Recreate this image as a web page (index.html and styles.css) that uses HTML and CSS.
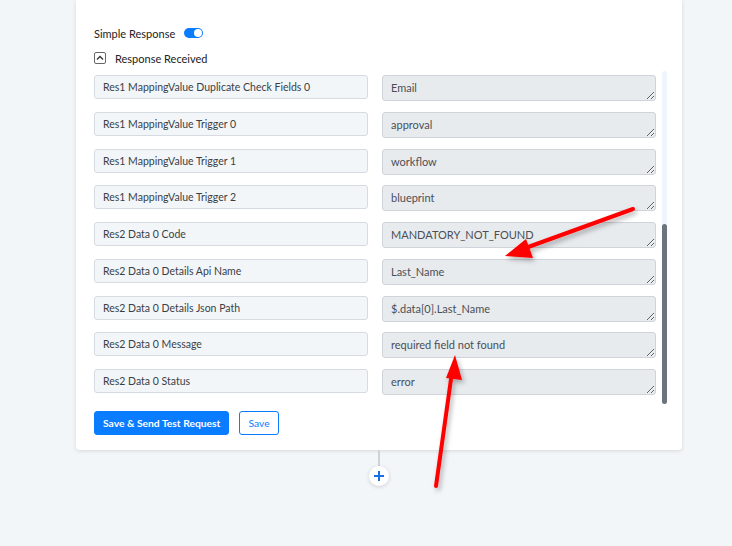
FILE: index.html
```html
<!DOCTYPE html>
<html lang="en">
<head>
    <meta charset="UTF-8">
    <meta name="viewport" content="width=device-width, initial-scale=1.0">
    <title>Response Mapping</title>
    <link rel="stylesheet" href="styles.css">
</head>
<body>
    <div class="page">
        <div class="card">
            <div class="toggle-row">
                <span>Simple Response</span>
                <span class="toggle"><span class="knob"></span></span>
            </div>
            <div class="section-head">
                <span class="chevron">
                    <svg width="8" height="6" viewBox="0 0 8 6"><path d="M1 4.5 L4 1.5 L7 4.5" fill="none" stroke="#333" stroke-width="1.3"/></svg>
                </span>
                <span>Response Received</span>
            </div>
            <div class="list">
                <div class="rows">
                    <div class="row">
                        <input class="key" type="text" value="Res1 MappingValue Duplicate Check Fields 0" readonly>
                        <textarea class="val" readonly>Email</textarea>
                    </div>
                    <div class="row">
                        <input class="key" type="text" value="Res1 MappingValue Trigger 0" readonly>
                        <textarea class="val" readonly>approval</textarea>
                    </div>
                    <div class="row">
                        <input class="key" type="text" value="Res1 MappingValue Trigger 1" readonly>
                        <textarea class="val" readonly>workflow</textarea>
                    </div>
                    <div class="row">
                        <input class="key" type="text" value="Res1 MappingValue Trigger 2" readonly>
                        <textarea class="val" readonly>blueprint</textarea>
                    </div>
                    <div class="row">
                        <input class="key" type="text" value="Res2 Data 0 Code" readonly>
                        <textarea class="val" readonly>MANDATORY_NOT_FOUND</textarea>
                    </div>
                    <div class="row">
                        <input class="key" type="text" value="Res2 Data 0 Details Api Name" readonly>
                        <textarea class="val" readonly>Last_Name</textarea>
                    </div>
                    <div class="row">
                        <input class="key" type="text" value="Res2 Data 0 Details Json Path" readonly>
                        <textarea class="val" readonly>$.data[0].Last_Name</textarea>
                    </div>
                    <div class="row">
                        <input class="key" type="text" value="Res2 Data 0 Message" readonly>
                        <textarea class="val" readonly>required field not found</textarea>
                    </div>
                    <div class="row">
                        <input class="key" type="text" value="Res2 Data 0 Status" readonly>
                        <textarea class="val" readonly>error</textarea>
                    </div>
                </div>
                <div class="track"><div class="thumb"></div></div>
            </div>
            <div class="actions">
                <button class="btn btn-primary">Save &amp; Send Test Request</button>
                <button class="btn btn-outline">Save</button>
            </div>
        </div>
        <div class="connector"></div>
        <div class="add">
            <svg width="12" height="12" viewBox="0 0 12 12"><path d="M6 1 V11 M1 6 H11" stroke="#1a6fe8" stroke-width="2"/></svg>
        </div>
    </div>

    <!-- annotation arrows -->
    <svg class="arrows" width="732" height="546" viewBox="0 0 732 546">
        <defs>
            <filter id="shade" x="-20%" y="-20%" width="140%" height="140%">
                <feDropShadow dx="2" dy="3" stdDeviation="2.5" flood-color="#000" flood-opacity="0.3"/>
            </filter>
        </defs>
        <g filter="url(#shade)" fill="#ff0000" stroke="#ff0000">
            <line x1="633" y1="209" x2="520" y2="250" stroke-width="4" stroke-linecap="round"/>
            <polygon points="505,256 526,239 533,258" stroke="none"/>
            <line x1="436" y1="486" x2="452" y2="372" stroke-width="4" stroke-linecap="round"/>
            <polygon points="455,355 462,380 446,378" stroke="none"/>
        </g>
    </svg>
</body>
</html>
```

FILE: styles.css
```css
body {
    margin: 0;
    background: #f3f6f9;
    font-family: Lato, 'Noto Sans', sans-serif;
    color: #333;
    position: relative;
    width: 732px;
    height: 546px;
    overflow: hidden;
}
.page {
    width: 606px;
    margin-left: 76px;
    display: flex;
    flex-direction: column;
    align-items: center;
}
.card {
    width: 606px;
    box-sizing: border-box;
    background: #fff;
    padding: 24px 15px 15px 18px;
    border-radius: 0 0 4px 4px;
    box-shadow: 0 1px 4px rgba(0, 0, 0, 0.12);
}
.toggle-row {
    height: 18px;
    display: flex;
    align-items: center;
    gap: 9px;
    font-size: 11px;
    color: #222;
}
.toggle {
    width: 19px;
    height: 10px;
    border-radius: 5px;
    background: #0a7cff;
    display: flex;
    justify-content: flex-end;
    align-items: center;
    padding: 0 1px;
    box-sizing: border-box;
}
.knob {
    width: 8px;
    height: 8px;
    border-radius: 50%;
    background: #fff;
}
.section-head {
    margin-top: 7px;
    height: 18px;
    display: flex;
    align-items: center;
    gap: 9px;
    font-size: 11px;
    color: #222;
}
.chevron {
    width: 12px;
    height: 12px;
    box-sizing: border-box;
    border: 1px solid #666;
    border-radius: 2px;
    display: flex;
    align-items: center;
    justify-content: center;
}
.list {
    margin-top: 4px;
    display: flex;
    gap: 6px;
}
.rows {
    width: 562px;
    padding: 4px 0 9px;
    display: flex;
    flex-direction: column;
    gap: 10.75px;
}
.row {
    display: grid;
    grid-template-columns: 274px 274px;
    column-gap: 14px;
    align-items: start;
}
.key {
    height: 24px;
    box-sizing: border-box;
    border: 1px solid #d6dbe1;
    border-radius: 3px;
    background: #f3f6f9;
    padding: 0 8px;
    font-family: inherit;
    font-size: 10.5px;
    color: #3a3f45;
    outline: none;
}
.val {
    height: 26px;
    box-sizing: border-box;
    border: 1px solid #cfd4da;
    border-radius: 3px;
    background: #e8ebee;
    padding: 4px 8px;
    font-family: inherit;
    font-size: 11px;
    line-height: 15px;
    color: #4a4f56;
    overflow: hidden;
    outline: none;
    display: block;
    width: 274px;
}
.track {
    width: 5px;
    background: #eef5fd;
    border-radius: 3px;
    display: flex;
    flex-direction: column;
}
.thumb {
    margin-top: auto;
    height: 180px;
    background: #6c747e;
    border-radius: 3px;
}
.actions {
    margin-top: 7px;
    display: flex;
    gap: 10px;
}
.btn {
    height: 24px;
    border-radius: 3px;
    font-family: inherit;
    font-size: 10.3px;
    font-weight: bold;
    padding: 0 8px;
    cursor: pointer;
}
.btn-primary {
    background: #0a7cff;
    border: 1px solid #0a7cff;
    color: #fff;
}
.btn-outline {
    background: #fff;
    border: 1px solid #0a7cff;
    color: #0a7cff;
    font-weight: normal;
}
.connector {
    width: 2px;
    height: 16px;
    background: #cdd3da;
}
.add {
    width: 20px;
    height: 20px;
    border-radius: 50%;
    background: #fff;
    box-shadow: 0 1px 4px rgba(0, 0, 0, 0.15);
    display: flex;
    align-items: center;
    justify-content: center;
}
.arrows {
    position: absolute;
    top: 0;
    left: 0;
    pointer-events: none;
}
```
